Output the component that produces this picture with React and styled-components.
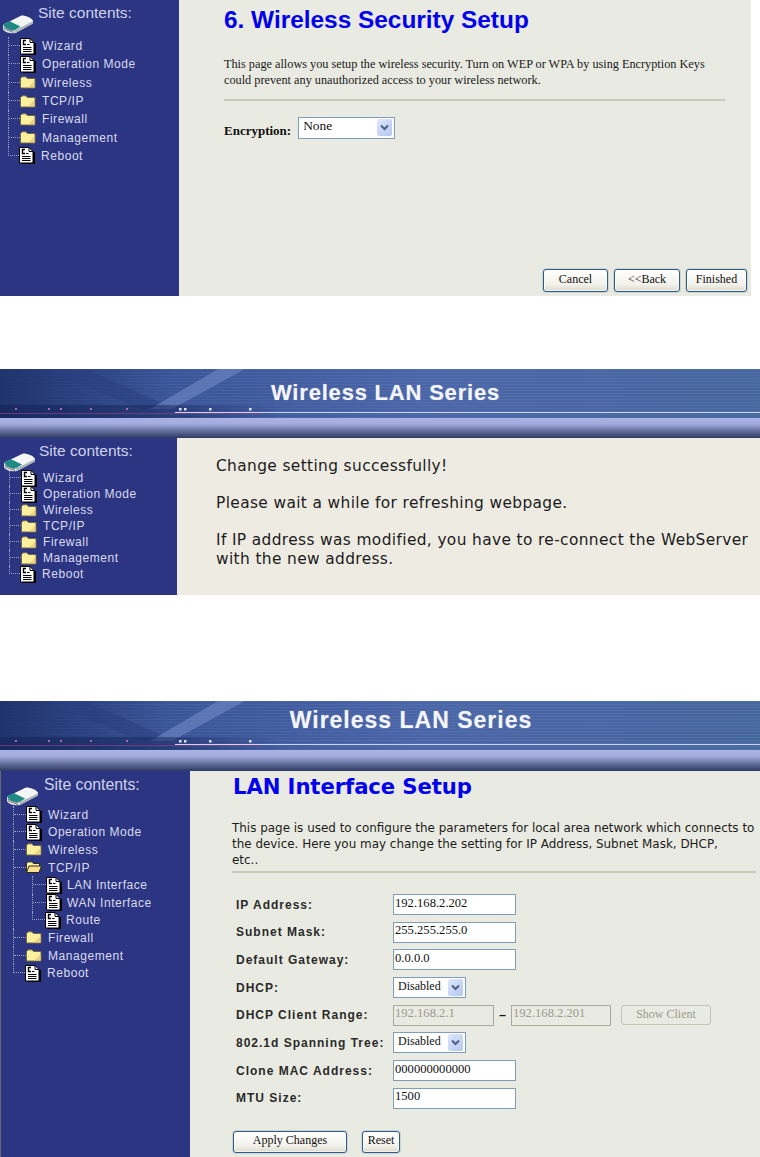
import React from "react";
import styled, { createGlobalStyle } from "styled-components";

const Global = createGlobalStyle`
  html, body { margin: 0; padding: 0; background: #fff; }
  body { font-family: "Liberation Sans", Arial, sans-serif; }
`;

const Page = styled.div`
  width: 760px;
  height: 1157px;
  overflow: hidden;
  display: flex;
  flex-direction: column;
`;

const Screen = styled.section`
  width: ${(p) => p.$width}px;
  height: ${(p) => p.$height}px;
  margin-top: ${(p) => p.$top || 0}px;
  display: flex;
  flex-direction: column;
  flex: none;
`;

const Body = styled.div`
  flex: 1;
  min-height: 0;
  display: flex;
  background: ${(p) => p.$bg || "#e9eae1"};
`;

/* ---------- banner ---------- */
const BannerBar = styled.header`
  position: relative;
  height: ${(p) => p.$height}px;
  flex: none;
  overflow: hidden;
  background:
    repeating-linear-gradient(180deg, rgba(255,255,255,.05) 0 1px, transparent 1px 3px),
    linear-gradient(90deg, #2f4b8f 0%, #3b5699 25%, #4a66a8 55%, #47689f 100%);
  display: flex;
  align-items: flex-start;
  justify-content: center;
`;

const BannerArt = styled.svg`
  position: absolute;
  left: 0;
  top: 0;
`;

const BannerTitle = styled.h1`
  position: relative;
  margin: ${(p) => p.$top}px 0 0 ${(p) => p.$shift}px;
  font: bold ${(p) => p.$size}px/1.2 "Liberation Sans", Arial, sans-serif;
  letter-spacing: ${(p) => p.$spacing}px;
  color: #f4f5fa;
  text-shadow: 0 0 1px rgba(255,255,255,.4);
`;

const Band = styled.div`
  height: ${(p) => p.$height}px;
  flex: none;
  background: linear-gradient(180deg, #aab3e3 0%, #a3acdc 30%, #6d77a8 60%, #2d3a60 100%);
`;

const Banner = ({ title, bar, band, size, top, shift, spacing }) => (
  <>
    <BannerBar $height={bar}>
      <BannerArt width="760" height={bar} viewBox={`0 0 760 ${bar}`} aria-hidden="true">
        <defs>
          <linearGradient id="fadeLeft" x1="0" x2="1" y1="0" y2="0">
            <stop offset="0" stopColor="#1d2f66" stopOpacity=".85" />
            <stop offset="1" stopColor="#1d2f66" stopOpacity="0" />
          </linearGradient>
          <linearGradient id="floor" x1="0" x2="1" y1="0" y2="0">
            <stop offset="0" stopColor="#16265c" stopOpacity=".7" />
            <stop offset=".6" stopColor="#16265c" stopOpacity=".5" />
            <stop offset="1" stopColor="#16265c" stopOpacity="0" />
          </linearGradient>
        </defs>
        <rect x="0" y="0" width="170" height={bar} fill="url(#fadeLeft)" />
        <polygon points="45,0 85,0 175,40 140,40" fill="#29407f" opacity=".55" />
        <polygon points="218,0 245,0 172,40 150,40" fill="#7288c4" opacity=".6" />
        <rect x="0" y="36" width="280" height="13" fill="url(#floor)" />
        <rect x="0" y="44" width="260" height="1" fill="#8a3f86" opacity=".7" />
        <rect x="175" y="43" width="585" height="1" fill="#ccd5ef" />
        {[15, 48, 60, 90, 126].map((x) => (
          <rect key={x} x={x} y="39" width="2" height="2" fill="#a56bb0" />
        ))}
        {[179, 184, 209, 249].map((x) => (
          <rect key={x} x={x} y="39" width="2.5" height="2.5" fill="#dfe5f5" />
        ))}
      </BannerArt>
      <BannerTitle $size={size} $top={top} $shift={shift} $spacing={spacing}>{title}</BannerTitle>
    </BannerBar>
    <Band $height={band} />
  </>
);

/* ---------- sidebar ---------- */
const Side = styled.aside`
  width: ${(p) => p.$width}px;
  flex: none;
  background: #2c3582;
  box-sizing: border-box;
  padding: ${(p) => p.$top}px 0 0 ${(p) => p.$left}px;
  ${(p) => (p.$edge ? "box-shadow: inset 1px 0 0 #6a6a6a;" : "")}
`;

const SideHead = styled.div`
  display: flex;
  align-items: flex-start;
  gap: ${(p) => p.$gap}px;
  height: ${(p) => p.$height}px;
`;

const SideTitle = styled.span`
  font-size: ${(p) => p.$size}px;
  line-height: 17px;
  color: #cfd2ec;
  margin-top: -9px;
  white-space: nowrap;
`;

const RouterIcon = styled.svg`
  flex: none;
  margin-top: 1px;
`;

const TreeList = styled.ul`
  list-style: none;
  margin: 0 0 0 ${(p) => p.$indent}px;
  padding: 0;
`;

const Item = styled.li`
  border-left: 1px dotted ${(p) => (p.$last ? "transparent" : "#9aa0bf")};
`;

const Row = styled.div`
  height: ${(p) => p.$h}px;
  display: flex;
  align-items: center;
`;

const Connector = styled.span`
  flex: none;
  align-self: flex-start;
  box-sizing: border-box;
  width: ${(p) => p.$w}px;
  height: 50%;
  border-bottom: 1px dotted #9aa0bf;
  ${(p) => (p.$last ? "margin-left: -1px; border-left: 1px dotted #9aa0bf;" : "")}
`;

const RowLabel = styled.span`
  margin-left: ${(p) => p.$gap}px;
  font-size: 12px;
  letter-spacing: .55px;
  color: #d9dbef;
  white-space: nowrap;
`;

const DocIcon = () => (
  <svg width="16" height="17" viewBox="0 0 16 17" aria-hidden="true" style={{ flex: "none" }}>
    <path d="M14 5h2v12H3v-1h11z" fill="#000" />
    <path d="M.5.5h9.5l4 4v11.5H.5z" fill="#fff" stroke="#000" />
    <path d="M10 .5v4h4" fill="none" stroke="#000" />
    <path d="M6 2.5H3.5v4H6" fill="none" stroke="#000" strokeWidth="1.4" />
    <path d="M7 6.5h2.5M3 9.5h8.5M3 11.5h8.5M3 13.5h8.5" fill="none" stroke="#000" />
  </svg>
);

const FolderIcon = () => (
  <svg width="16" height="13" viewBox="0 0 16 13" aria-hidden="true" style={{ flex: "none" }}>
    <path d="M.5 2.5 2 .8h4l1.5 1.7h7.5v9.5H.5z" fill="#fff0a0" stroke="#6f6a3c" />
    <path d="M8 11.5h6.5V5z" fill="#e6c97e" opacity=".8" />
  </svg>
);

const OpenFolderIcon = () => (
  <svg width="16" height="13" viewBox="0 0 16 13" aria-hidden="true" style={{ flex: "none" }}>
    <path d="M.5 11.5v-9L2 .8h4l1.5 1.7h6v2.5" fill="#fff0a0" stroke="#2b2b1c" />
    <path d="M.5 11.5 3 5h12.5l-2.5 6.5z" fill="#f8e08e" stroke="#2b2b1c" />
  </svg>
);

const ICONS = { doc: DocIcon, folder: FolderIcon, open: OpenFolderIcon };

const Router = ({ width }) => (
  <RouterIcon width={width} height="20" viewBox="0 0 33 21" preserveAspectRatio="none" aria-hidden="true">
    <path d="M1 11 20 2c5 0 10 2 12 5v3L14 20c-5 1-12-1-13-4z" fill="#d7dce0" />
    <path d="M8 8 20 1.5c5 0 10 2.5 12 5.5L20 14z" fill="#f4f6f4" />
    <path d="M1 11 8 7.5 19 13 13 17c-5 0-10-2-12-6z" fill="#1d8a84" />
    <path d="M1 12c1 3 7 5 12 5.5v2.5C8 20 2 18 1 15z" fill="#e4e8ea" />
    <path d="M2 14l10 4M2 15.5l10 4" stroke="#39505f" strokeWidth=".7" />
    <path d="M13 17.5 32 8v2L14 20z" fill="#aab3b8" />
  </RouterIcon>
);

const Tree = ({ items, h, indent, conn, gap, sub }) => (
  <TreeList $indent={indent}>
    {items.map((it, i) => {
      const Icon = ICONS[it.icon];
      const last = i === items.length - 1;
      return (
        <Item key={it.label} $last={last}>
          <Row $h={h}>
            <Connector $w={conn} $last={last} />
            <Icon />
            <RowLabel $gap={gap}>{it.label}</RowLabel>
          </Row>
          {it.children && (
            <Tree items={it.children} h={h} indent={sub.indent} conn={sub.conn} gap={sub.gap} />
          )}
        </Item>
      );
    })}
  </TreeList>
);

const BASE = [
  { icon: "doc", label: "Wizard" },
  { icon: "doc", label: "Operation Mode" },
  { icon: "folder", label: "Wireless" },
  { icon: "folder", label: "TCP/IP" },
  { icon: "folder", label: "Firewall" },
  { icon: "folder", label: "Management" },
  { icon: "doc", label: "Reboot" },
];

const EXPANDED = BASE.map((b) =>
  b.label === "TCP/IP"
    ? {
        icon: "open",
        label: "TCP/IP",
        children: [
          { icon: "doc", label: "LAN Interface" },
          { icon: "doc", label: "WAN Interface" },
          { icon: "doc", label: "Route" },
        ],
      }
    : b
);

const Sidebar = ({ width, top, left, headH, headGap, titleSize, rowH, indent, conn, gap, items, edge, iconW }) => (
  <Side $width={width} $top={top} $left={left} $edge={edge}>
    <SideHead $height={headH} $gap={headGap}>
      <Router width={iconW} />
      <SideTitle $size={titleSize}>Site contents:</SideTitle>
    </SideHead>
    <Tree items={items} h={rowH} indent={indent} conn={conn} gap={gap} sub={{ indent: 18, conn: 13, gap: 5 }} />
  </Side>
);

/* ---------- wizard content ---------- */
const WizardMain = styled.main`
  flex: 1;
  min-width: 0;
  padding: 6px 4px 4px 45px;
  display: flex;
  flex-direction: column;
`;

const WizardTitle = styled.h2`
  margin: 0;
  font: bold 24.4px/27px "Liberation Sans", Arial, sans-serif;
  color: #0000ee;
`;

const SerifText = styled.p`
  margin: 23px 0 0;
  width: 500px;
  font: 12.25px/16px "Liberation Serif", "Times New Roman", serif;
  color: #1a1a1a;
`;

const Rule = styled.hr`
  margin: ${(p) => p.$top}px 0 0;
  border: 0;
  height: 2px;
  width: ${(p) => p.$width}px;
  background: #c9cab9;
`;

const EncRow = styled.div`
  margin-top: 15px;
  display: flex;
  align-items: center;
  gap: 7px;
`;

const EncLabel = styled.label`
  font: bold 13px/16px "Liberation Serif", "Times New Roman", serif;
  color: #111;
  padding-top: 7px;
`;

const WizardButtons = styled.div`
  margin-top: auto;
  display: flex;
  justify-content: flex-end;
  gap: 6px;
`;

const SelectBox = styled.div`
  box-sizing: border-box;
  width: ${(p) => p.$width}px;
  height: ${(p) => p.$height}px;
  display: flex;
  align-items: center;
  justify-content: space-between;
  padding: 0 2px 0 ${(p) => p.$pad}px;
  border: 1px solid #7f9db9;
  background: #fff;
  font: ${(p) => p.$size || 12}px/14px "Liberation Serif", "Times New Roman", serif;
  color: #111;
`;

const SelectText = styled.span`
  padding-bottom: 3px;
`;

const SelectArrow = styled.span`
  flex: none;
  width: 15px;
  height: 17px;
  display: flex;
  align-items: center;
  justify-content: center;
  border-radius: 2px;
  background: linear-gradient(135deg, #dfe8fb, #b4c6f0);
`;

const Select = ({ value, width, height, pad, size }) => (
  <SelectBox $width={width} $height={height} $pad={pad} $size={size}>
    <SelectText>{value}</SelectText>
    <SelectArrow>
      <svg width="9" height="7" viewBox="0 0 9 7" aria-hidden="true">
        <path d="M1 1.5 4.5 5 8 1.5" fill="none" stroke="#4d6185" strokeWidth="2" />
      </svg>
    </SelectArrow>
  </SelectBox>
);

const Button = styled.button`
  box-sizing: border-box;
  width: ${(p) => p.$width}px;
  height: ${(p) => p.$height || 23}px;
  padding: 0 0 3px;
  border: 1px solid ${(p) => (p.disabled ? "#c4c4b4" : "#2f5b86")};
  border-radius: 3px;
  background: ${(p) => (p.disabled ? "#e9eae1" : "linear-gradient(180deg, #fff 0%, #f2f1ea 70%, #dcdacb 100%)")};
  box-shadow: ${(p) => (p.disabled ? "none" : "inset 0 0 0 1px rgba(255,255,255,.7), 0 0 0 1px rgba(120,150,180,.25)")};
  font: 12px/14px "Liberation Serif", "Times New Roman", serif;
  color: ${(p) => (p.disabled ? "#9b9b90" : "#111")};
`;

/* ---------- message content ---------- */
const MessageMain = styled.main`
  flex: 1;
  min-width: 0;
  padding: 19px 0 0 39px;
`;

const Message = styled.p`
  margin: 0 0 18px;
  width: 540px;
  font: 15.4px/19px "DejaVu Sans", Verdana, sans-serif;
  letter-spacing: .37px;
  color: #1c1c1c;
`;

/* ---------- LAN form ---------- */
const FormMain = styled.main`
  flex: 1;
  min-width: 0;
  padding: 2px 0 0 42px;
`;

const FormTitle = styled.h2`
  margin: 0 0 0 1px;
  font: bold 21.2px/27px "DejaVu Sans", Verdana, sans-serif;
  letter-spacing: -.1px;
  color: #0000ee;
`;

const FormIntro = styled.p`
  margin: 20px 0 0;
  width: 528px;
  font: 11.95px/16px "DejaVu Sans", Verdana, sans-serif;
  color: #1c1c1c;
`;

const Fields = styled.div`
  margin-top: 21px;
  display: grid;
  grid-template-columns: 161px 1fr;
  grid-auto-rows: 21px;
  row-gap: 6.7px;
  align-items: center;
`;

const FieldLabel = styled.label`
  padding-left: 4px;
  font: bold 12px/14px "Liberation Sans", Arial, sans-serif;
  letter-spacing: 1px;
  color: #2a2a2a;
  white-space: nowrap;
`;

const FieldControls = styled.div`
  display: flex;
  align-items: center;
`;

const TextInput = styled.input`
  box-sizing: border-box;
  width: ${(p) => p.$width || 123}px;
  height: 21px;
  padding: 0 1px 3px;
  border: 1px solid ${(p) => (p.disabled ? "#a9a99c" : "#7f9db9")};
  background: ${(p) => (p.disabled ? "#e9eae1" : "#fff")};
  font: 12.6px/14px "Liberation Serif", "Times New Roman", serif;
  color: #111;
  outline: 0;
  &:disabled { color: #9b9b90; }
`;

const Dash = styled.span`
  width: 17px;
  text-align: center;
  font: bold 12px/14px "Liberation Sans", Arial, sans-serif;
  color: #111;
`;

const ShowClient = styled(Button)`
  margin-left: 10px;
  height: 20px;
`;

const FormButtons = styled.div`
  margin: 22px 0 0 1px;
  display: flex;
  gap: 15px;
`;

export default function App() {
  return (
    <Page>
      <Global />

      <Screen $width={751} $height={296}>
        <Body>
          <Sidebar width={179} top={13} left={2} headH={24} headGap={4} titleSize={15.5} iconW={32}
            rowH={18.3} indent={6} conn={11} gap={6} items={BASE} />
          <WizardMain>
            <WizardTitle>6. Wireless Security Setup</WizardTitle>
            <SerifText>
              This page allows you setup the wireless security. Turn on WEP or WPA by using Encryption Keys could prevent any unauthorized access to your wireless network.
            </SerifText>
            <Rule $top={11} $width={501} />
            <EncRow>
              <EncLabel>Encryption:</EncLabel>
              <Select value="None" width={97} height={22} pad={4} size={13.4} />
            </EncRow>
            <WizardButtons>
              <Button $width={65}>Cancel</Button>
              <Button $width={66}>&lt;&lt;Back</Button>
              <Button $width={61}>Finished</Button>
            </WizardButtons>
          </WizardMain>
        </Body>
      </Screen>

      <Screen $width={760} $height={226} $top={73}>
        <Banner title="Wireless LAN Series" bar={49} band={20} size={22} top={11} shift={11} spacing={0.8} />
        <Body $bg="#eeebe3">
          <Sidebar width={177} top={13} left={3} headH={19} headGap={3} titleSize={15.5} iconW={33}
            rowH={16} indent={6} conn={11} gap={6} items={BASE} />
          <MessageMain>
            <Message>Change setting successfully!</Message>
            <Message>Please wait a while for refreshing webpage.</Message>
            <Message>If IP address was modified, you have to re-connect the WebServer with the new address.</Message>
          </MessageMain>
        </Body>
      </Screen>

      <Screen $width={760} $height={456} $top={106}>
        <Banner title="Wireless LAN Series" bar={49} band={21} size={23} top={6} shift={62} spacing={1} />
        <Body>
          <Sidebar width={190} top={14} left={6} headH={21} headGap={5} titleSize={15.8} iconW={33} edge
            rowH={17.6} indent={7} conn={12} gap={6} items={EXPANDED} />
          <FormMain>
            <FormTitle>LAN Interface Setup</FormTitle>
            <FormIntro>
              This page is used to configure the parameters for local area network which connects to the device. Here you may change the setting for IP Address, Subnet Mask, DHCP,
              <br />
              etc..
            </FormIntro>
            <Rule $top={3} $width={524} />
            <Fields>
              <FieldLabel>IP Address:</FieldLabel>
              <FieldControls><TextInput readOnly defaultValue="192.168.2.202" /></FieldControls>
              <FieldLabel>Subnet Mask:</FieldLabel>
              <FieldControls><TextInput readOnly defaultValue="255.255.255.0" /></FieldControls>
              <FieldLabel>Default Gateway:</FieldLabel>
              <FieldControls><TextInput readOnly defaultValue="0.0.0.0" /></FieldControls>
              <FieldLabel>DHCP:</FieldLabel>
              <FieldControls><Select value="Disabled" width={73} height={21} pad={4} /></FieldControls>
              <FieldLabel>DHCP Client Range:</FieldLabel>
              <FieldControls>
                <TextInput disabled $width={101} defaultValue="192.168.2.1" />
                <Dash>–</Dash>
                <TextInput disabled $width={100} defaultValue="192.168.2.201" />
                <ShowClient disabled $width={90}>Show Client</ShowClient>
              </FieldControls>
              <FieldLabel>802.1d Spanning Tree:</FieldLabel>
              <FieldControls><Select value="Disabled" width={73} height={21} pad={4} /></FieldControls>
              <FieldLabel>Clone MAC Address:</FieldLabel>
              <FieldControls><TextInput readOnly defaultValue="000000000000" /></FieldControls>
              <FieldLabel>MTU Size:</FieldLabel>
              <FieldControls><TextInput readOnly defaultValue="1500" /></FieldControls>
            </Fields>
            <FormButtons>
              <Button $width={114} $height={22}>Apply Changes</Button>
              <Button $width={38} $height={22}>Reset</Button>
            </FormButtons>
          </FormMain>
        </Body>
      </Screen>
    </Page>
  );
}
